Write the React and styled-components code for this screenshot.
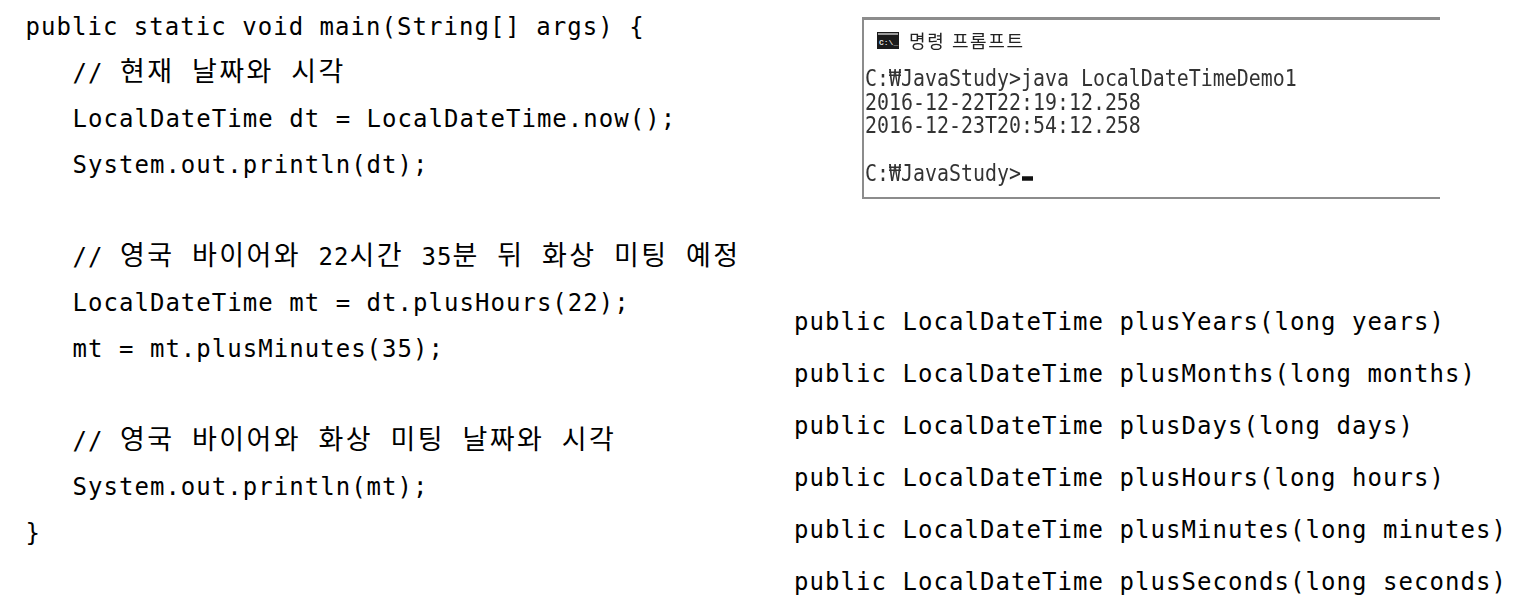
import React from 'react';
import styled, { createGlobalStyle } from 'styled-components';

const GlobalStyle = createGlobalStyle`
  html, body {
    margin: 0;
    background: #fff;
  }
`;

const MONO = `"DejaVu Sans Mono", "Noto Sans CJK KR", monospace`;

const Page = styled.div`
  width: 1525px;
  height: 616px;
  overflow: hidden;
  display: grid;
  grid-template-columns: 794px 1fr;
  background: #fff;
  color: #000;
`;

const LeftColumn = styled.div`
  padding: 4px 0 0 25.5px;
`;

const CodeLine = styled.div`
  height: 46px;
  line-height: 46px;
  font-family: ${MONO};
  font-size: 24px;
  letter-spacing: 1.03px;
  white-space: pre;
  padding-left: ${(p) => (p.$indent ? '47px' : '0')};
`;

const Korean = styled.span`
  font-family: "Noto Sans CJK KR", sans-serif;
  font-size: 27px;
  line-height: 0;
  letter-spacing: 2.4px;
  word-spacing: 9.1px;
  margin-left: ${(p) => (p.$first ? '1px' : '0')};
`;

const RightColumn = styled.div`
  display: flex;
  flex-direction: column;
`;

const Terminal = styled.div`
  width: 578px;
  height: 182px;
  margin: 17px 0 0 68px;
  box-sizing: border-box;
  border-style: solid;
  border-color: #8c8c8c;
  border-width: 3px 0 2px 2px;
  padding: 8px 0 0 1px;
  filter: blur(0.35px);
`;

const TitleBar = styled.div`
  display: flex;
  align-items: center;
  gap: 10px;
  height: 24px;
  padding-left: 12px;
  margin-bottom: 15px;
`;

const TitleText = styled.span`
  font-family: "Noto Sans CJK KR", sans-serif;
  font-size: 18px;
  letter-spacing: 1.6px;
  word-spacing: 1px;
  color: #222;
`;

const TermLine = styled.div`
  height: 23.7px;
  line-height: 23.7px;
  font-family: "DejaVu Sans Mono", monospace;
  font-size: 19.93px;
  white-space: pre;
  color: #333;
  transform: scaleY(1.12);
`;

const Cursor = styled.span`
  display: inline-block;
  width: 11px;
  height: 4px;
  background: #111;
  margin-left: 1px;
`;

const MethodList = styled.div`
  margin-top: 97px;
`;

const MethodLine = styled.div`
  height: 52px;
  line-height: 52px;
  font-family: ${MONO};
  font-size: 24px;
  letter-spacing: 1.05px;
  white-space: pre;
`;

const PromptIcon = () => (
  <svg width="22" height="17" viewBox="0 0 22 17">
    <rect width="22" height="17" fill="#1a1a1a" />
    <rect x="1" y="1" width="20" height="2" fill="#999" />
    <text x="2" y="13" fontSize="8" fontFamily="Liberation Mono" fontWeight="700" fill="#ddd">C:\_</text>
  </svg>
);

const methods = [
  'plusYears(long years)',
  'plusMonths(long months)',
  'plusDays(long days)',
  'plusHours(long hours)',
  'plusMinutes(long minutes)',
  'plusSeconds(long seconds)',
];

export default function App() {
  return (
    <Page>
      <GlobalStyle />
      <LeftColumn>
        <CodeLine>public static void main(String[] args) {'{'}</CodeLine>
        <CodeLine $indent>// <Korean $first>현재 날짜와 시각</Korean></CodeLine>
        <CodeLine $indent>LocalDateTime dt = LocalDateTime.now();</CodeLine>
        <CodeLine $indent>System.out.println(dt);</CodeLine>
        <CodeLine />
        <CodeLine $indent>// <Korean $first>영국 바이어와 </Korean>22<Korean>시간 </Korean>35<Korean>분 뒤 화상 미팅 예정</Korean></CodeLine>
        <CodeLine $indent>LocalDateTime mt = dt.plusHours(22);</CodeLine>
        <CodeLine $indent>mt = mt.plusMinutes(35);</CodeLine>
        <CodeLine />
        <CodeLine $indent>// <Korean $first>영국 바이어와 화상 미팅 날짜와 시각</Korean></CodeLine>
        <CodeLine $indent>System.out.println(mt);</CodeLine>
        <CodeLine>{'}'}</CodeLine>
      </LeftColumn>
      <RightColumn>
        <Terminal>
          <TitleBar>
            <PromptIcon />
            <TitleText>명령 프롬프트</TitleText>
          </TitleBar>
          <TermLine>C:₩JavaStudy&gt;java LocalDateTimeDemo1</TermLine>
          <TermLine>2016-12-22T22:19:12.258</TermLine>
          <TermLine>2016-12-23T20:54:12.258</TermLine>
          <TermLine> </TermLine>
          <TermLine>C:₩JavaStudy&gt;<Cursor /></TermLine>
        </Terminal>
        <MethodList>
          {methods.map((m) => (
            <MethodLine key={m}>public LocalDateTime {m}</MethodLine>
          ))}
        </MethodList>
      </RightColumn>
    </Page>
  );
}
